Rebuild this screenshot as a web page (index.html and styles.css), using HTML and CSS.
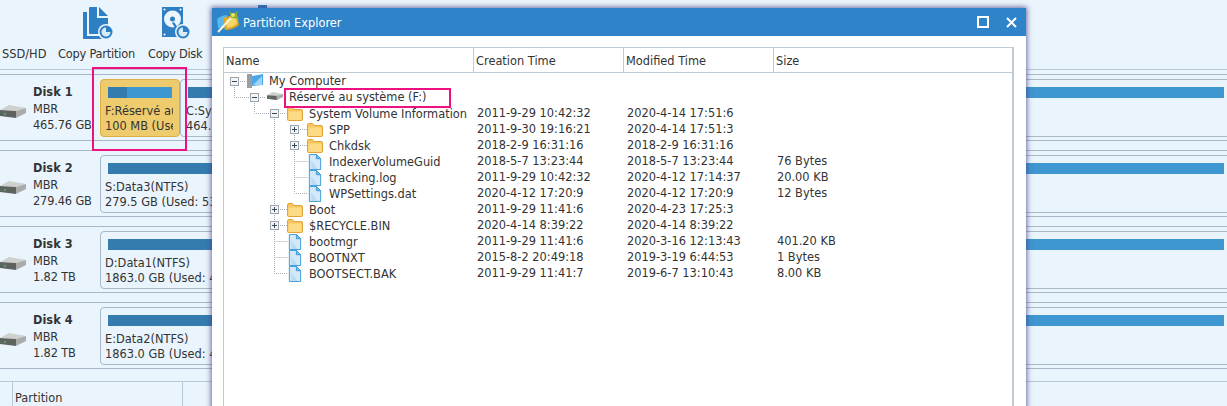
FILE: index.html
```html
<!DOCTYPE html>
<html lang="en">
<head>
<meta charset="utf-8">
<title>Partition Explorer</title>
<link rel="stylesheet" href="styles.css">
</head>
<body>
<svg class="defs" width="0" height="0" aria-hidden="true">
  <defs>
    <symbol id="i-folder" viewBox="0 0 16 14">
      <path d="M.5 12.500V2q0-1.500 1.500-1.500h3.500l1.500 2h7q1.500 0 1.500 1.500v8.500q0 1-1 1H1.500q-1 0-1-1z" fill="#f8c65c" stroke="#e2a535"/>
      <path d="M1.500 4.500h13v8.500h-13z" fill="#fddb86"/>
    </symbol>
    <symbol id="i-file" viewBox="0 0 14 17">
      <path d="M1 .5h7.500l4.500 4.500v11.500H1z" fill="#d3e9f9" stroke="#3b9ad9"/>
      <path d="M8.500 .5v4.500h4.500z" fill="#7dbde9" stroke="#3b9ad9"/>
      <path d="M3 7l7 9H3z" fill="#b9dbf4"/>
    </symbol>
    <symbol id="i-drive" viewBox="0 0 26 13">
      <path d="M0 5l9-5 17 3-10 3z" fill="#cfd1cf"/>
      <path d="M0 5l16 1v7L0 11z" fill="#5f635f"/>
      <path d="M16 6l10-3v5l-10 5z" fill="#a9aca9"/>
      <rect x="4" y="8" width="2" height="2" fill="#46a868"/>
    </symbol>
    <symbol id="i-plus" viewBox="0 0 9 9">
      <rect x=".5" y=".5" width="8" height="8" fill="#f2f4f6" stroke="#9aa4ae"/>
      <path d="M2 4.500h5M4.500 2v5" stroke="#3c4650"/>
    </symbol>
    <symbol id="i-minus" viewBox="0 0 9 9">
      <rect x=".5" y=".5" width="8" height="8" fill="#f2f4f6" stroke="#9aa4ae"/>
      <path d="M2 4.500h5" stroke="#3c4650"/>
    </symbol>
  </defs>
</svg>

<div class="app">
  <header class="toolbar">
    <div class="tool tool-ssd"><span class="tool-label">SSD/HD</span></div>
    <div class="tool tool-part">
      <svg class="tool-icon" width="32" height="33" viewBox="0 0 32 33">
        <path d="M1 6h4v24h16v4H3q-2 0-2-2z" fill="#2f7fc5"/>
        <path d="M8 1h7v11h11v16H8q-1 0-1-1V2q0-1 1-1z" fill="#2f7fc5"/>
        <path d="M17 1l9 9h-9z" fill="#2f7fc5"/>
        <circle cx="24" cy="26" r="8" fill="#eaf4fc"/>
        <circle cx="24" cy="26" r="6.500" fill="#2f7fc5"/>
        <path d="M24 21.500a4.500 4.500 0 1 0 4.500 4.500H24z" fill="#d8ebf8"/>
      </svg>
      <span class="tool-label">Copy Partition</span>
    </div>
    <div class="tool tool-disk">
      <svg class="tool-icon" width="30" height="32" viewBox="0 0 30 32">
        <path d="M0 0h21v30H0z" fill="#2f7fc5"/>
        <circle cx="10.500" cy="12" r="8.500" fill="#eaf4fc"/>
        <circle cx="10.500" cy="12" r="2.500" fill="#2f7fc5"/>
        <path d="M12 15l4 6-2 1-4-6z" fill="#2f7fc5"/>
        <circle cx="2.500" cy="2.500" r="1" fill="#fff"/>
        <circle cx="18.500" cy="2.500" r="1" fill="#fff"/>
        <circle cx="2.500" cy="27.500" r="1" fill="#fff"/>
        <circle cx="21" cy="25" r="8" fill="#eaf4fc"/>
        <circle cx="21" cy="25" r="6.500" fill="#2f7fc5"/>
        <path d="M21 20.500a4.500 4.500 0 1 0 4.500 4.500H21z" fill="#d8ebf8"/>
      </svg>
      <span class="tool-label">Copy Disk</span>
    </div>
    <div class="tool tool-next"><i class="tool-peek"></i></div>
  </header>

  <main class="disks">
    <section class="disk">
      <svg class="disk-icon" width="26" height="13"><use href="#i-drive"/></svg>
      <div class="disk-info"><strong>Disk 1</strong><span>MBR</span><span>465.76 GB</span></div>
      <div class="card card-selected">
        <div class="bar"><i class="used used-f"></i></div>
        <div class="card-text"><span>F:Réservé au système</span><span>100 MB (Used: 30 MB)</span></div>
      </div>
      <div class="card card-c">
        <div class="bar"><i class="used"></i></div>
        <div class="card-text"><span>C:System(NTFS)</span><span>464.8 GB (Used: 60 GB)</span></div>
      </div>
    </section>
    <section class="disk">
      <svg class="disk-icon" width="26" height="13"><use href="#i-drive"/></svg>
      <div class="disk-info"><strong>Disk 2</strong><span>MBR</span><span>279.46 GB</span></div>
      <div class="card">
        <div class="bar"><i class="used"></i></div>
        <div class="card-text"><span>S:Data3(NTFS)</span><span>279.5 GB (Used: 53 GB)</span></div>
      </div>
    </section>
    <section class="disk">
      <svg class="disk-icon" width="26" height="13"><use href="#i-drive"/></svg>
      <div class="disk-info"><strong>Disk 3</strong><span>MBR</span><span>1.82 TB</span></div>
      <div class="card">
        <div class="bar"><i class="used"></i></div>
        <div class="card-text"><span>D:Data1(NTFS)</span><span>1863.0 GB (Used: 400 GB)</span></div>
      </div>
    </section>
    <section class="disk">
      <svg class="disk-icon" width="26" height="13"><use href="#i-drive"/></svg>
      <div class="disk-info"><strong>Disk 4</strong><span>MBR</span><span>1.82 TB</span></div>
      <div class="card">
        <div class="bar"><i class="used"></i></div>
        <div class="card-text"><span>E:Data2(NTFS)</span><span>1863.0 GB (Used: 400 GB)</span></div>
      </div>
    </section>
  </main>

  <div class="list-head">
    <div class="list-gutter"></div>
    <div class="list-col">Partition</div>
  </div>

  <div class="mark mark-card"></div>

  <div class="dialog">
    <div class="titlebar">
      <svg class="app-logo" width="22" height="23" viewBox="0 0 22 23">
        <path d="M0 9q5-4 10-4v13q-5 1-9 0z" fill="#58b7e8"/>
        <path d="M6 8l14-4 2 11q-6 5-14 5z" fill="#dca923"/>
        <path d="M9 10l10-3 1 7q-4 3-10 4z" fill="#f4d566"/>
        <path d="M1 22L14 8" stroke="#f7f3e4" stroke-width="2"/>
        <path d="M14 7L12 1l4 3 5-3-2 5 3 3-6-1z" fill="#7fae35"/>
        <circle cx="16" cy="5" r="2" fill="#f6de6a"/>
      </svg>
      <span class="title">Partition Explorer</span>
      <span class="win-max"></span>
      <svg class="win-close" width="11" height="11" viewBox="0 0 11 11"><path d="M1 1l9 9M10 1l-9 9" stroke="#fff" stroke-width="2"/></svg>
    </div>
    <div class="panel">
      <div class="thead">
        <div class="th">Name</div>
        <div class="th">Creation Time</div>
        <div class="th">Modified Time</div>
        <div class="th">Size</div>
      </div>
      <div class="tree">
        <svg class="tree-lines" width="790" height="210" viewBox="224 73 790 210">
          <path d="M234.500 85v12.500H250M254.500 101v12.500H270M274.500 117v156.500H288M294.500 133v60.500H308M298 129.500h9M298 145.500h9M294.500 161.500H308M294.500 177.500H308M278 209.500h9M278 225.500h9M274.500 241.500H288M274.500 257.500H288M238 81.500h8M258 97.500h8M278 113.500h8" fill="none" stroke="#a8aeb4" stroke-dasharray="1 1"/>
        </svg>

        <div class="tr"><div class="name d0"><svg class="tog"><use href="#i-minus"/></svg>
          <svg class="ico" width="16" height="16" viewBox="0 0 16 16"><rect x="0" y="1" width="5" height="14" fill="#9a9ea2"/><path d="M5 3l11-2v11L5 13z" fill="#4aa8e6"/><path d="M6 12l9-9v9z" fill="#9bd3f5"/></svg>
          <span>My Computer</span></div><div></div><div></div><div></div></div>
        <div class="tr"><div class="name d1"><svg class="tog"><use href="#i-minus"/></svg>
          <svg class="ico" width="16" height="16" viewBox="0 -2 26 20"><use href="#i-drive" width="26" height="13"/></svg>
          <span>Réservé au système (F:)</span></div><div></div><div></div><div></div></div>
        <div class="tr"><div class="name d2"><svg class="tog"><use href="#i-minus"/></svg>
          <svg class="ico"><use href="#i-folder"/></svg><span>System Volume Information</span></div>
          <div>2011-9-29 10:42:32</div><div>2020-4-14 17:51:6</div><div></div></div>
        <div class="tr"><div class="name d3"><svg class="tog"><use href="#i-plus"/></svg>
          <svg class="ico"><use href="#i-folder"/></svg><span>SPP</span></div>
          <div>2011-9-30 19:16:21</div><div>2020-4-14 17:51:3</div><div></div></div>
        <div class="tr"><div class="name d3"><svg class="tog"><use href="#i-plus"/></svg>
          <svg class="ico"><use href="#i-folder"/></svg><span>Chkdsk</span></div>
          <div>2018-2-9 16:31:16</div><div>2018-2-9 16:31:16</div><div></div></div>
        <div class="tr"><div class="name d3"><i class="tog"></i>
          <svg class="ico"><use href="#i-file"/></svg><span>IndexerVolumeGuid</span></div>
          <div>2018-5-7 13:23:44</div><div>2018-5-7 13:23:44</div><div>76 Bytes</div></div>
        <div class="tr"><div class="name d3"><i class="tog"></i>
          <svg class="ico"><use href="#i-file"/></svg><span>tracking.log</span></div>
          <div>2011-9-29 10:42:32</div><div>2020-4-12 17:14:37</div><div>20.00 KB</div></div>
        <div class="tr"><div class="name d3"><i class="tog"></i>
          <svg class="ico"><use href="#i-file"/></svg><span>WPSettings.dat</span></div>
          <div>2020-4-12 17:20:9</div><div>2020-4-12 17:20:9</div><div>12 Bytes</div></div>
        <div class="tr"><div class="name d2"><svg class="tog"><use href="#i-plus"/></svg>
          <svg class="ico"><use href="#i-folder"/></svg><span>Boot</span></div>
          <div>2011-9-29 11:41:6</div><div>2020-4-23 17:25:3</div><div></div></div>
        <div class="tr"><div class="name d2"><svg class="tog"><use href="#i-plus"/></svg>
          <svg class="ico"><use href="#i-folder"/></svg><span>$RECYCLE.BIN</span></div>
          <div>2020-4-14 8:39:22</div><div>2020-4-14 8:39:22</div><div></div></div>
        <div class="tr"><div class="name d2"><i class="tog"></i>
          <svg class="ico"><use href="#i-file"/></svg><span>bootmgr</span></div>
          <div>2011-9-29 11:41:6</div><div>2020-3-16 12:13:43</div><div>401.20 KB</div></div>
        <div class="tr"><div class="name d2"><i class="tog"></i>
          <svg class="ico"><use href="#i-file"/></svg><span>BOOTNXT</span></div>
          <div>2015-8-2 20:49:18</div><div>2019-3-19 6:44:53</div><div>1 Bytes</div></div>
        <div class="tr"><div class="name d2"><i class="tog"></i>
          <svg class="ico"><use href="#i-file"/></svg><span>BOOTSECT.BAK</span></div>
          <div>2011-9-29 11:41:7</div><div>2019-6-7 13:10:43</div><div>8.00 KB</div></div>

        <div class="mark mark-row"></div>
      </div>
    </div>
  </div>
</div>
</body>
</html>
```

FILE: styles.css
```css
* { box-sizing: border-box; }
html, body { margin: 0; height: 100%; }
body { overflow: hidden; background: #eaf4fc; }
.defs { position: absolute; }

.app {
  position: relative;
  width: 1227px;
  height: 406px;
  overflow: hidden;
  background: #eaf4fc;
  color: #333;
  font: 11.4px/16px "DejaVu Sans", "Noto Sans", sans-serif;
}

/* toolbar */
.toolbar {
  display: flex;
  height: 70px;
  border-bottom: 1px solid #b9c8d6;
}
.tool { position: relative; height: 69px; white-space: nowrap; }
.tool-ssd { width: 58px; }
.tool-part { width: 90px; }
.tool-disk { width: 60px; }
.tool-next { padding: 5px 0 0 50px; }
.tool-peek { display: block; width: 9px; height: 5px; background: #2f7fc5; }
.tool-label { position: absolute; top: 46px; left: 2px; }
.tool-part .tool-label { left: 0; letter-spacing: -.22px; }
.tool-part .tool-icon { position: absolute; left: 24px; top: 6px; }
.tool-disk .tool-label { left: 0; letter-spacing: -.3px; }
.tool-disk .tool-icon { position: absolute; left: 14px; top: 7px; }

/* disks */
.disks {
  display: flex;
  flex-direction: column;
  gap: 9px;
  padding-top: 4px;
}
.disk {
  display: flex;
  height: 67px;
  padding: 4px 0 3px;
  border-top: 1px solid #a9b8c8;
  border-bottom: 1px solid #a9b8c8;
}
.disk-icon { flex: none; margin: 26px 7px 0 0; }
.disk-info {
  flex: none;
  display: flex;
  flex-direction: column;
  width: 67px;
  padding-top: 5px;
  white-space: nowrap;
}
.disk-info span { letter-spacing: -.15px; }
.disk-info strong { height: 17px; font-weight: 700; }
.card {
  flex: 1;
  min-width: 0;
  margin-right: -5px;
  padding: 7px 0 0 4px;
  border: 1px solid #a9b8c8;
  border-radius: 4px;
  overflow: hidden;
  white-space: nowrap;
}
.card-selected {
  flex: none;
  width: 80px;
  margin-right: 0;
  background: #eecb6c;
  border-color: #dcae44;
}
.card-c { padding-left: 5px; }
.bar {
  height: 11px;
  margin: 0 7px 5px 3px;
  background: #3e97d1;
}
.card-c .bar { margin-left: 2px; }
.used { display: block; width: 50%; height: 100%; background: #357cae; }
.used-f { width: 19px; }
.card-text { display: flex; flex-direction: column; height: 31px; margin-right: 6px; overflow: hidden; }
.card-text span { height: 15px; }

/* bottom list */
.list-head {
  position: absolute;
  left: 0;
  right: 0;
  top: 381px;
  bottom: 0;
  display: flex;
  border-top: 1px solid #b9c8d6;
}
.list-gutter { width: 13px; border-right: 1px solid #b9c8d6; }
.list-col { width: 170px; padding: 8px 0 0 2px; border-right: 1px solid #b9c8d6; }

/* highlight rectangles */
.mark { position: absolute; border: 2px solid #ee1080; pointer-events: none; }
.mark-card { left: 92px; top: 67px; width: 95px; height: 84px; }
.mark-row { left: 60px; top: 15px; width: 167px; height: 20px; }

/* dialog */
.dialog {
  position: absolute;
  left: 212px;
  top: 8px;
  width: 814px;
  height: 420px;
  background: #fff;
  box-shadow: 0 0 5px 1px rgba(66, 62, 130, .75);
}
.titlebar {
  display: flex;
  align-items: center;
  height: 28px;
  padding: 0 9px 0 5px;
  background: #2f83c8;
  color: #fff;
}
.app-logo { flex: none; margin: -2px 4px 0 0; }
.title { flex: 1; padding-top: 1px; font-size: 11.4px; }
.win-max { width: 12px; height: 12px; margin-right: 17px; border: 2px solid #fff; }
.win-close { flex: none; }

.panel {
  margin: 11px 12px 0 11px;
  height: 400px;
  border: 1px solid #c0ccd4;
  border-right-width: 2px;
}
.thead {
  display: grid;
  grid-template-columns: 250px 150px 150px 1fr;
  height: 25px;
  border-bottom: 1px solid #c0ccd4;
}
.th { padding: 5px 0 0 2px; border-right: 1px solid #c0ccd4; line-height: 17px; }
.th:last-child { border-right: 0; }

.tree { position: relative; }
.tree-lines { position: absolute; left: 0; top: 0; }
.tr {
  position: relative;
  display: grid;
  grid-template-columns: 250px 150px 150px 1fr;
  height: 16px;
  line-height: 17px;
  white-space: nowrap;
}
.tr > div:not(.name) { padding-left: 3px; }
.name { display: flex; align-items: center; }
.name span { height: 16px; }
.d0 { padding-left: 6px; }
.d1 { padding-left: 26px; }
.d2 { padding-left: 46px; }
.d3 { padding-left: 66px; }
.tog { flex: none; display: block; width: 9px; height: 9px; margin-right: 8px; }
.ico { flex: none; width: 16px; height: 16px; margin-right: 6px; }
```
